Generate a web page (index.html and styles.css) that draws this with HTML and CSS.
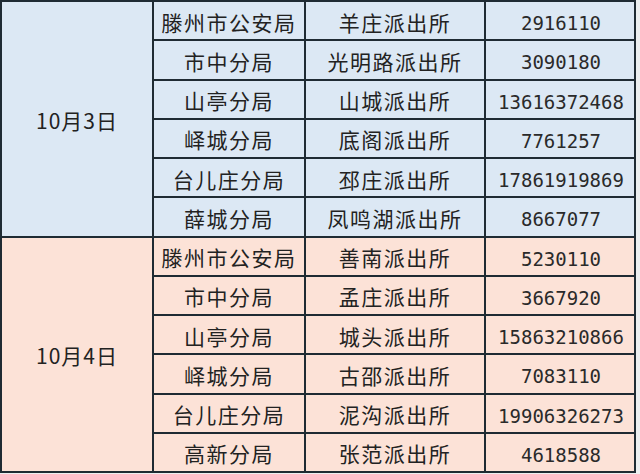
FILE: index.html
```html
<!DOCTYPE html>
<html lang="zh">
<head>
<meta charset="utf-8">
<link rel="stylesheet" href="styles.css">
</head>
<body>
<table class="duty">
  <colgroup>
    <col class="c-date"><col class="c-bureau"><col class="c-station"><col class="c-phone">
  </colgroup>
  <tbody class="g-blue">
    <tr><td class="date" rowspan="6">10月3日</td><td>滕州市公安局</td><td>羊庄派出所</td><td class="num">2916110</td></tr>
    <tr><td>市中分局</td><td>光明路派出所</td><td class="num">3090180</td></tr>
    <tr><td>山亭分局</td><td>山城派出所</td><td class="num">13616372468</td></tr>
    <tr><td>峄城分局</td><td>底阁派出所</td><td class="num">7761257</td></tr>
    <tr><td>台儿庄分局</td><td>邳庄派出所</td><td class="num">17861919869</td></tr>
    <tr><td>薛城分局</td><td>凤鸣湖派出所</td><td class="num">8667077</td></tr>
  </tbody>
  <tbody class="g-pink">
    <tr><td class="date" rowspan="6">10月4日</td><td>滕州市公安局</td><td>善南派出所</td><td class="num">5230110</td></tr>
    <tr><td>市中分局</td><td>孟庄派出所</td><td class="num">3667920</td></tr>
    <tr><td>山亭分局</td><td>城头派出所</td><td class="num">15863210866</td></tr>
    <tr><td>峄城分局</td><td>古邵派出所</td><td class="num">7083110</td></tr>
    <tr><td>台儿庄分局</td><td>泥沟派出所</td><td class="num">19906326273</td></tr>
    <tr><td>高新分局</td><td>张范派出所</td><td class="num">4618588</td></tr>
  </tbody>
</table>
</body>
</html>
```
FILE: styles.css
```css
html, body {
  margin: 0;
  padding: 0;
  background: #eceff0;
}
.duty {
  border-collapse: collapse;
  width: 634px;
  height: 473px;
  table-layout: fixed;
  font-family: "Noto Sans CJK SC", "Noto Sans", sans-serif;
  font-size: 21px;
  color: #222;
}
.c-date { width: 152px; }
.c-bureau { width: 152px; }
.c-station { width: 180px; }
.c-phone { width: 150px; }
.duty td {
  border: 2px solid #1f2b33;
  text-align: center;
  vertical-align: middle;
  padding: 3px 0 0 0;
  letter-spacing: 1.5px;
  white-space: nowrap;
  line-height: 1;
}
.duty td.date {
  letter-spacing: 1px;
  font-size: 21px;
}
.duty td.num {
  font-family: "DejaVu Sans Mono", "Liberation Mono", monospace;
  font-size: 19px;
  letter-spacing: 0;
  color: #2a2a2a;
  padding: 6px 0 0 2px;
}
.g-blue td { background: #dce8f4; }
.g-pink td { background: #fce2d7; }
```
